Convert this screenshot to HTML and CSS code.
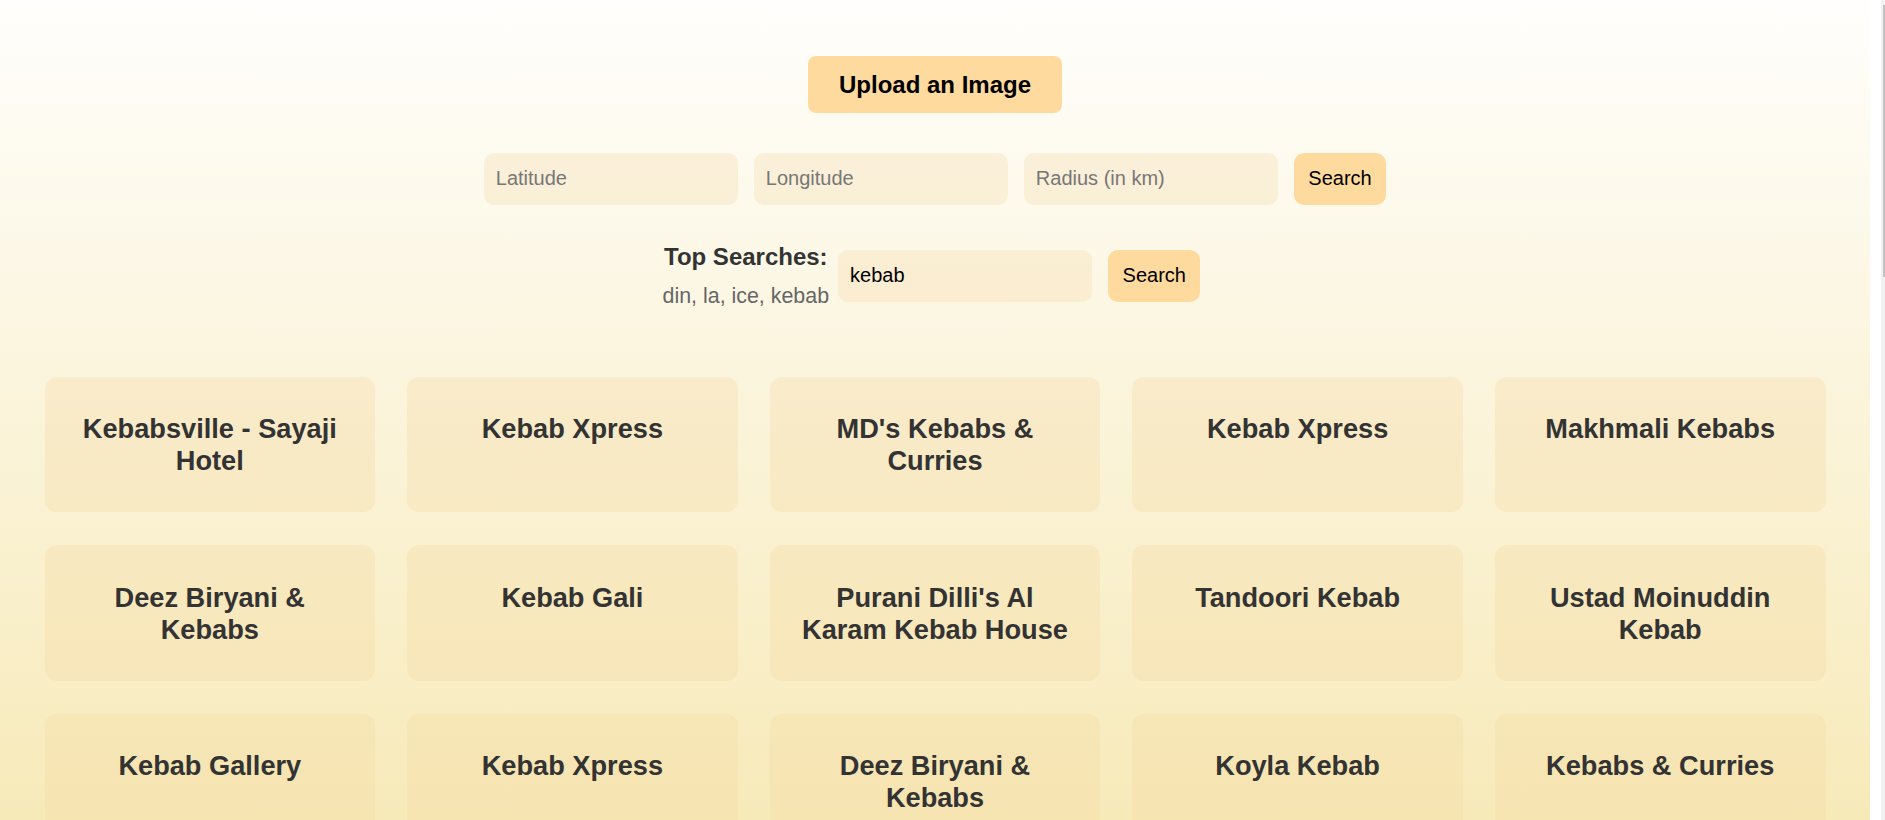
FILE: index.html
```
<!DOCTYPE html>
<html lang="en">
<head>
<meta charset="utf-8">
<title>Restaurant Search</title>
<link rel="stylesheet" href="styles.css">
</head>
<body>
<div class="page">
  <div class="upload-row">
    <button class="upload">Upload an Image</button>
  </div>
  <div class="coords">
    <input class="field" type="text" placeholder="Latitude">
    <input class="field" type="text" placeholder="Longitude">
    <input class="field" type="text" placeholder="Radius (in km)">
    <button class="search-btn">Search</button>
  </div>
  <div class="top">
    <div class="top-label">
      <div class="top-title">Top Searches:</div>
      <div class="top-list">din, la, ice, kebab</div>
    </div>
    <input class="field" type="text" value="kebab">
    <button class="search-btn">Search</button>
  </div>
  <div class="grid">
    <div class="card"><h3>Kebabsville - Sayaji Hotel</h3></div>
    <div class="card"><h3>Kebab Xpress</h3></div>
    <div class="card"><h3>MD's Kebabs &amp; Curries</h3></div>
    <div class="card"><h3>Kebab Xpress</h3></div>
    <div class="card"><h3>Makhmali Kebabs</h3></div>
    <div class="card"><h3>Deez Biryani &amp; Kebabs</h3></div>
    <div class="card"><h3>Kebab Gali</h3></div>
    <div class="card"><h3>Purani Dilli's Al Karam Kebab House</h3></div>
    <div class="card"><h3>Tandoori Kebab</h3></div>
    <div class="card"><h3>Ustad Moinuddin Kebab</h3></div>
    <div class="card"><h3>Kebab Gallery</h3></div>
    <div class="card"><h3>Kebab Xpress</h3></div>
    <div class="card"><h3>Deez Biryani &amp; Kebabs</h3></div>
    <div class="card"><h3>Koyla Kebab</h3></div>
    <div class="card"><h3>Kebabs &amp; Curries</h3></div>
  </div>
</div>
<div class="scrollbar"><div class="scroll-thumb"></div></div>
</body>
</html>
```
FILE: styles.css
```
html {
  background: #ffffff;
}
html, body {
  padding: 0;
  margin: 0;
}
body {
  margin-right: 15px;
  font-family: "Liberation Sans", Arial, sans-serif;
  background: linear-gradient(to bottom, #fffefc 0%, #f7eab9 100%) fixed;
  min-height: 100vh;
}
.scrollbar {
  position: fixed;
  top: 0;
  right: 0;
  width: 4px;
  height: 100vh;
  background: #f1f1f1;
}
.scroll-thumb {
  margin: 5px 0 0 auto;
  width: 2px;
  height: 272px;
  background: #c1c1c1;
}
.page {
  padding-top: 56px;
  padding-bottom: 40px;
}
.upload-row {
  display: flex;
  justify-content: center;
}
.upload {
  font-family: inherit;
  font-size: 24px;
  font-weight: bold;
  color: #000;
  background: #ffda9e;
  border: none;
  border-radius: 8px;
  height: 57px;
  padding: 0 30.5px;
  cursor: pointer;
}
.coords {
  margin-top: 39.5px;
  display: flex;
  justify-content: center;
  gap: 16px;
}
.field {
  width: 254px;
  height: 52px;
  box-sizing: border-box;
  padding: 0 12px;
  font-family: inherit;
  font-size: 20px;
  color: #000;
  background: rgba(245, 215, 165, 0.3);
  border: none;
  border-radius: 10px;
  outline: none;
}
.field::placeholder {
  color: #777;
}
.search-btn {
  height: 52px;
  padding: 0 14.5px;
  font-family: inherit;
  font-size: 20px;
  color: #000;
  background: #ffda9e;
  border: none;
  border-radius: 10px;
  cursor: pointer;
}
.top {
  margin-top: 39.3px;
  display: flex;
  justify-content: center;
  align-items: center;
  gap: 16px;
  padding-right: 7px;
}
.top-label {
  text-align: center;
  margin-right: -7px;
}
.top-title {
  font-size: 24px;
  font-weight: bold;
  color: #333;
  line-height: 26px;
}
.top-list {
  margin-top: 14.4px;
  font-size: 21.4px;
  color: #666;
  line-height: 24px;
}
.grid {
  margin-top: 68.8px;
  display: grid;
  grid-template-columns: repeat(5, 1fr);
  column-gap: 32px;
  row-gap: 33px;
  padding: 0 44.5px;
}
.card {
  background: rgba(245, 215, 160, 0.3);
  border-radius: 12px;
  padding: 36.5px 28px 35px;
  text-align: center;
}
.card h3 {
  margin: 0;
  font-size: 27.2px;
  font-weight: bold;
  color: #333;
  line-height: normal;
}
```
